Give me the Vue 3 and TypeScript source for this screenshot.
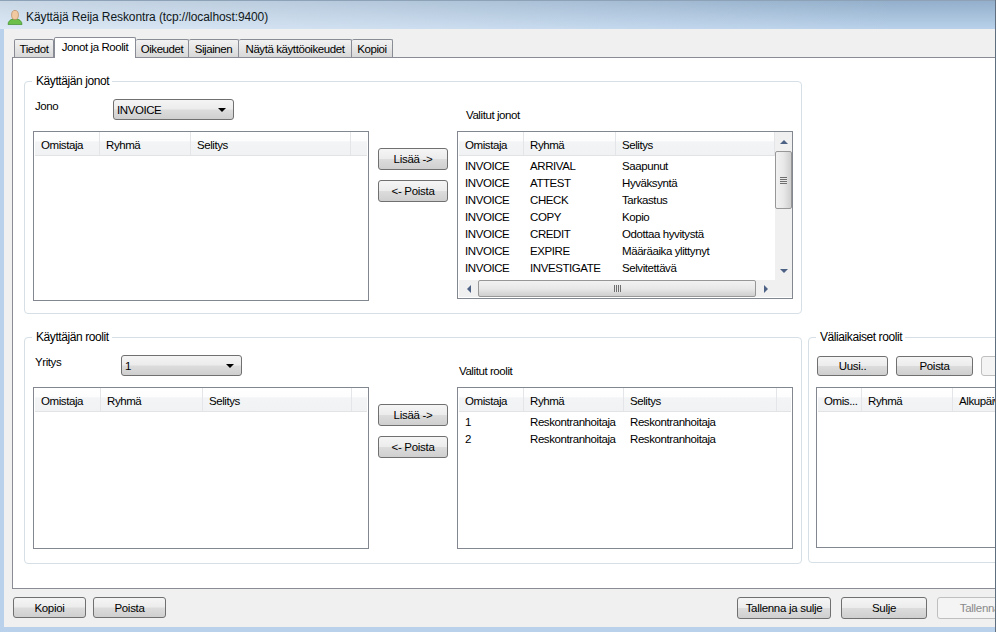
<script setup lang="ts">
interface Col { label: string; width: number }
interface List { cols: Col[]; rows: string[][]; scroll?: boolean }
interface Group {
  key: string
  title: string
  comboLabel: string
  comboValue: string
  rightLabel: string
  left: List
  right: List
}

const tabs = ['Tiedot', 'Jonot ja Roolit', 'Oikeudet', 'Sijainen', 'Näytä käyttöoikeudet', 'Kopioi']

const queueRows = [
  ['INVOICE', 'ARRIVAL', 'Saapunut'],
  ['INVOICE', 'ATTEST', 'Hyväksyntä'],
  ['INVOICE', 'CHECK', 'Tarkastus'],
  ['INVOICE', 'COPY', 'Kopio'],
  ['INVOICE', 'CREDIT', 'Odottaa hyvitystä'],
  ['INVOICE', 'EXPIRE', 'Määräaika ylittynyt'],
  ['INVOICE', 'INVESTIGATE', 'Selvitettävä'],
]

const groups: Group[] = [
  {
    key: 'jonot',
    title: 'Käyttäjän jonot',
    comboLabel: 'Jono',
    comboValue: 'INVOICE',
    rightLabel: 'Valitut jonot',
    left: {
      cols: [
        { label: 'Omistaja', width: 65 },
        { label: 'Ryhmä', width: 91 },
        { label: 'Selitys', width: 160 },
        { label: '', width: 18 },
      ],
      rows: [],
    },
    right: {
      cols: [
        { label: 'Omistaja', width: 65 },
        { label: 'Ryhmä', width: 92 },
        { label: 'Selitys', width: 159 },
      ],
      rows: queueRows,
      scroll: true,
    },
  },
  {
    key: 'roolit',
    title: 'Käyttäjän roolit',
    comboLabel: 'Yritys',
    comboValue: '1',
    rightLabel: 'Valitut roolit',
    left: {
      cols: [
        { label: 'Omistaja', width: 66 },
        { label: 'Ryhmä', width: 102 },
        { label: 'Selitys', width: 149 },
        { label: '', width: 17 },
      ],
      rows: [],
    },
    right: {
      cols: [
        { label: 'Omistaja', width: 65 },
        { label: 'Ryhmä', width: 100 },
        { label: 'Selitys', width: 153 },
        { label: '', width: 16 },
      ],
      rows: [
        ['1', 'Reskontranhoitaja', 'Reskontranhoitaja'],
        ['2', 'Reskontranhoitaja', 'Reskontranhoitaja'],
      ],
    },
  },
]

const tempCols: Col[] = [
  { label: 'Omis...', width: 44 },
  { label: 'Ryhmä', width: 91 },
  { label: 'Alkupäivä', width: 60 },
]
</script>

<template>
  <div class="window">
    <header class="titlebar">
      <svg class="user-icon" viewBox="0 0 16 16" width="16" height="16" aria-hidden="true">
        <path d="M1 15.5c0-3.2 2.6-5 4.6-5.4h4.8c2 .4 4.6 2.2 4.6 5.4z" fill="#6cc04a" stroke="#3f8f2e" stroke-width=".7" />
        <ellipse cx="8" cy="6" rx="3.4" ry="4.6" fill="#f1c9a0" stroke="#b98a5e" stroke-width=".7" />
      </svg>
      <span>Käyttäjä Reija Reskontra (tcp://localhost:9400)</span>
    </header>

    <div class="client">
      <nav class="tabs">
        <div v-for="(tab, i) in tabs" :key="tab" class="tab" :class="[`tab-${i}`, { active: i === 1 }]">{{ tab }}</div>
      </nav>

      <main class="panel">
        <div class="group-row" v-for="group in groups" :key="group.key" :class="`row-${group.key}`">
          <section class="group main-group" :class="`group-${group.key}`">
            <h3 class="legend">{{ group.title }}</h3>
            <div class="group-top">
              <div class="combo-area">
                <label class="combo-label">{{ group.comboLabel }}</label>
                <div class="combo">
                  <span>{{ group.comboValue }}</span>
                  <i class="caret"></i>
                </div>
              </div>
              <div class="right-label">{{ group.rightLabel }}</div>
            </div>
            <div class="group-body">
              <div class="list">
                <div class="list-head">
                  <div v-for="(c, ci) in group.left.cols" :key="ci" class="col" :style="{ width: c.width + 'px' }">{{ c.label }}</div>
                </div>
              </div>
              <div class="mover">
                <button class="btn mover-btn">Lisää -&gt;</button>
                <button class="btn mover-btn">&lt;- Poista</button>
              </div>
              <div class="list" :class="{ 'list-scroll': group.right.scroll }">
                <div class="list-main">
                  <div class="list-head">
                    <div v-for="(c, ci) in group.right.cols" :key="ci" class="col" :style="{ width: c.width + 'px' }">{{ c.label }}</div>
                  </div>
                  <div class="list-rows">
                    <div v-for="(row, ri) in group.right.rows" :key="ri" class="list-row">
                      <div v-for="(cell, ci) in row" :key="ci" class="cell" :style="{ width: group.right.cols[ci].width + 'px' }">{{ cell }}</div>
                    </div>
                  </div>
                </div>
                <template v-if="group.right.scroll">
                  <div class="vscroll">
                    <div class="sb-btn"><i class="arrow up"></i></div>
                    <div class="vthumb"><i class="grip-h"></i></div>
                    <div class="sb-fill"></div>
                    <div class="sb-btn"><i class="arrow down"></i></div>
                  </div>
                  <div class="hscroll">
                    <div class="sb-btn-h"><i class="arrow left"></i></div>
                    <div class="hthumb"><i class="grip-v"></i></div>
                    <div class="sb-btn-h"><i class="arrow right"></i></div>
                  </div>
                  <div class="corner"></div>
                </template>
              </div>
            </div>
          </section>

          <section v-if="group.key === 'roolit'" class="group temp-group">
            <h3 class="legend">Väliaikaiset roolit</h3>
            <div class="temp-actions">
              <button class="btn temp-new">Uusi..</button>
              <button class="btn temp-del">Poista</button>
              <button class="btn temp-off" disabled></button>
            </div>
            <div class="list temp-list">
              <div class="list-head">
                <div v-for="c in tempCols" :key="c.label" class="col temp-col" :style="{ width: c.width + 'px' }">{{ c.label }}</div>
              </div>
            </div>
          </section>
        </div>
      </main>

      <footer class="footer">
        <div class="footer-side">
          <button class="btn foot-btn">Kopioi</button>
          <button class="btn foot-btn">Poista</button>
        </div>
        <div class="footer-side right">
          <button class="btn save-close">Tallenna ja sulje</button>
          <button class="btn close">Sulje</button>
          <button class="btn save" disabled>Tallenna</button>
        </div>
      </footer>
    </div>
  </div>
</template>

<style>
html, body { margin: 0; padding: 0; background: #fff; }
</style>

<style scoped>
.window {
  width: 995px;
  height: 632px;
  border-right: 1px solid #5f6f80;
  display: flex;
  flex-direction: column;
  overflow: hidden;
  background: #b9d1ea;
  font-family: "Liberation Sans", Arial, sans-serif;
  font-size: 11.5px;
  letter-spacing: -.42px;
  color: #000;
  box-sizing: content-box;
}
.titlebar {
  height: 29px;
  flex: none;
  box-sizing: border-box;
  display: flex;
  align-items: center;
  gap: 3px;
  padding: 3px 0 0 7px;
  border-top: 1px solid #8da2b6;
  background:
    linear-gradient(90deg, rgba(255, 255, 255, .5), rgba(255, 255, 255, .3) 40%, rgba(255, 255, 255, 0) 90%),
    linear-gradient(#93afcb, #b9d1ea);
  color: #101820;
  font-size: 12px;
  letter-spacing: -.1px;
}
.user-icon { flex: none; }
.client {
  flex: 1;
  margin: 0 0 5px 4px;
  min-height: 0;
  background: #f0f0f0;
  display: flex;
  flex-direction: column;
  overflow: hidden;
}
.tabs {
  height: 28px;
  flex: none;
  box-sizing: border-box;
  padding-left: 10px;
  display: flex;
  align-items: flex-end;
  position: relative;
  z-index: 1;
}
.tab {
  height: 18px;
  box-sizing: border-box;
  border: 1px solid #898c95;
  border-bottom: none;
  border-left-width: 0;
  background: linear-gradient(#f2f2f2, #e6e6e6 50%, #d8d8d8);
  border-radius: 2px 2px 0 0;
  display: flex;
  align-items: center;
  justify-content: center;
  white-space: nowrap;
}
.tab-0 { width: 40px; border-left-width: 1px; }
.tab-2 { width: 53px; border-left-width: 0; }
.tab-3 { width: 50px; }
.tab-4 { width: 113px; }
.tab-5 { width: 41px; }
.tab.active {
  width: 82px;
  height: 21px;
  margin-bottom: -1px;
  border-left-width: 1px;
  background: #fff;
  padding-bottom: 3px;
}
.panel {
  flex: 1;
  min-height: 0;
  margin-left: 8px;
  box-sizing: border-box;
  background: #fff;
  border: 1px solid #898c95;
  border-right: none;
  padding: 23px 0 0 11px;
  display: flex;
  flex-direction: column;
  gap: 23px;
  overflow: hidden;
}
.group-row { display: flex; gap: 6px; width: 1040px; flex: none; }
.group {
  position: relative;
  box-sizing: border-box;
  border: 1px solid #d5dfe5;
  border-radius: 4px;
  flex: none;
}
.main-group { width: 778px; padding: 0 8px; }
.group-jonot { height: 233px; }
.group-roolit { height: 227px; }
.legend {
  position: absolute;
  left: 7px;
  top: -7px;
  margin: 0;
  padding: 0 3px 0 4px;
  background: #fff;
  font-size: 12px;
  font-weight: normal;
  line-height: 13px;
}
.group-top { height: 49px; display: flex; position: relative; }
.combo-area { width: 424px; display: flex; }
.combo-label { width: 80px; padding: 17px 0 0 2px; box-sizing: border-box; line-height: 14px; }
.group-roolit .combo-label { width: 88px; }
.combo {
  width: 121px;
  height: 21px;
  margin-top: 17px;
  box-sizing: border-box;
  border: 1px solid #707070;
  border-radius: 3px;
  background: linear-gradient(#f4f4f4, #ececec 48%, #dcdcdc 52%, #cfcfcf);
  display: flex;
  align-items: center;
  justify-content: space-between;
  padding: 0 7px 0 3px;
}
.caret {
  width: 0;
  height: 0;
  border-left: 4px solid transparent;
  border-right: 4px solid transparent;
  border-top: 4px solid #000;
}
.right-label { padding: 26px 0 0 9px; line-height: 14px; }
.group-roolit .right-label { padding: 26px 0 0 2px; }
.group-body { display: flex; align-items: flex-start; }
.list {
  width: 336px;
  height: 170px;
  box-sizing: border-box;
  border: 1px solid #828790;
  background: #fff;
  flex: none;
  padding: 0 1px;
  overflow: hidden;
  position: relative;
}
.group-roolit .list { height: 162px; }
.list-scroll {
  height: 168px;
  display: grid;
  grid-template-columns: 316px 17px;
  grid-template-rows: 148px 17px;
  padding: 0 0 0 1px;
}
.list-main { min-width: 0; overflow: hidden; }
.list-head {
  height: 24px;
  box-sizing: border-box;
  display: flex;
  background: linear-gradient(#ffffff, #fdfdfd 40%, #f2f4f6 42%, #f0f2f4);
  border-bottom: 1px solid #e2e3e5;
}
.col {
  flex: none;
  box-sizing: border-box;
  padding: 3px 0 0 6px;
  display: flex;
  align-items: center;
  border-right: 1px solid #e3e5e8;
  white-space: nowrap;
  overflow: hidden;
}
.list-rows { padding-top: 2px; }
.list-row { display: flex; height: 17px; }
.cell {
  flex: none;
  box-sizing: border-box;
  padding-left: 6px;
  line-height: 17px;
  white-space: nowrap;
}
.mover {
  width: 88px;
  flex: none;
  box-sizing: border-box;
  padding: 17px 0 0 9px;
  display: flex;
  flex-direction: column;
  gap: 10px;
}
.btn {
  flex: none;
  box-sizing: border-box;
  border: 1px solid #707070;
  border-radius: 3px;
  background: linear-gradient(#f5f5f5, #ececec 48%, #dcdcdc 52%, #cfcfcf);
  font: inherit;
  letter-spacing: -.3px;
  color: #000;
  padding: 0;
  white-space: nowrap;
  overflow: hidden;
}
.btn:disabled {
  border-color: #bfbfbf;
  background: #f4f4f4;
  color: #8a8a8a;
}
.mover-btn { width: 70px; height: 22px; }
.vscroll {
  grid-column: 2;
  grid-row: 1;
  background: #f0f0f0;
  display: flex;
  flex-direction: column;
  padding-top: 0;
}
.sb-btn { height: 19px; flex: none; display: flex; align-items: center; justify-content: center; }
.vthumb {
  height: 58px;
  flex: none;
  box-sizing: border-box;
  border: 1px solid #979797;
  border-radius: 2px;
  background: linear-gradient(90deg, #f2f2f2, #e8e8e8 50%, #cfcfcf);
  display: flex;
  align-items: center;
  justify-content: center;
}
.sb-fill { flex: 1; }
.hscroll {
  grid-column: 1;
  grid-row: 2;
  background: #f0f0f0;
  display: flex;
}
.sb-btn-h { width: 19px; flex: none; display: flex; align-items: center; justify-content: center; }
.hthumb {
  flex: 1;
  box-sizing: border-box;
  border: 1px solid #979797;
  border-radius: 2px;
  background: linear-gradient(#f2f2f2, #e8e8e8 50%, #cfcfcf);
  display: flex;
  align-items: center;
  justify-content: center;
}
.corner { grid-column: 2; grid-row: 2; background: #f0f0f0; }
.arrow { width: 0; height: 0; display: block; }
.arrow.up { border: 4px solid transparent; border-top: 0; border-bottom: 4px solid #4d6185; }
.arrow.down { border: 4px solid transparent; border-bottom: 0; border-top: 4px solid #4d6185; }
.arrow.left { border: 4px solid transparent; border-left: 0; border-right: 4px solid #4d6185; }
.arrow.right { border: 4px solid transparent; border-right: 0; border-left: 4px solid #4d6185; }
.grip-h {
  width: 7px;
  height: 7px;
  display: block;
  background: repeating-linear-gradient(#6f6f6f 0 1px, #e8e8e8 1px 2px);
}
.grip-v {
  width: 7px;
  height: 7px;
  display: block;
  background: repeating-linear-gradient(90deg, #6f6f6f 0 1px, #e8e8e8 1px 2px);
}
.temp-group { width: 260px; height: 226px; padding: 18px 8px 0 8px; }
.temp-actions { display: flex; gap: 8px; height: 31px; }
.temp-new { width: 71px; height: 20px; }
.temp-del { width: 77px; height: 20px; }
.temp-off { width: 70px; height: 20px; }
.temp-list { width: 230px; height: 161px; margin-left: -1px; }
.temp-col { padding-left: 6px; }
.footer {
  height: 38px;
  flex: none;
  width: 1019px;
  box-sizing: border-box;
  padding: 8px 0 0 9px;
  display: flex;
  justify-content: space-between;
  align-items: flex-start;
}
.footer-side { display: flex; gap: 7px; }
.footer-side.right { gap: 10px; }
.foot-btn { width: 73px; height: 21px; }
.save-close { width: 94px; height: 22px; }
.close { width: 86px; height: 22px; }
.save { width: 86px; height: 22px; }
</style>
